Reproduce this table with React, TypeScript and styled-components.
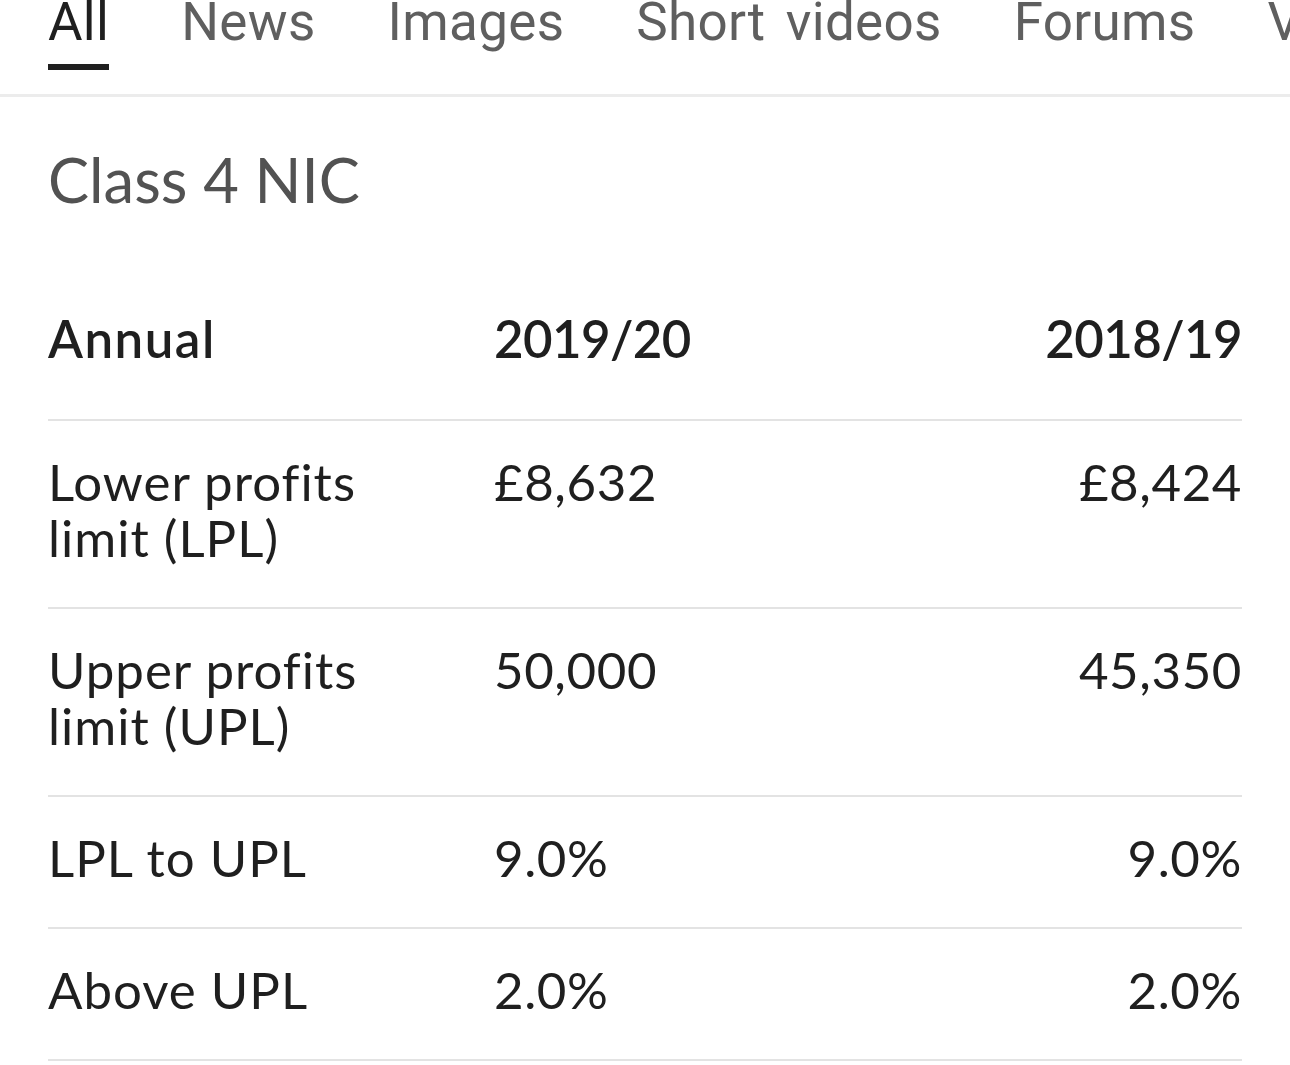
import React from "react";
import styled, { createGlobalStyle } from "styled-components";

const GlobalStyle = createGlobalStyle`
  html, body {
    margin: 0;
    padding: 0;
    background: #ffffff;
    overflow: hidden;
  }
`;

const Page = styled.div`
  width: 1290px;
  min-height: 1065px;
  background: #ffffff;
`;

const TabBar = styled.nav`
  display: flex;
  gap: 72px;
  padding: 0 48px 24px;
  border-bottom: 3px solid #ececec;
  overflow: hidden;
  white-space: nowrap;
`;

const Tab = styled.div<{ $active?: boolean }>`
  display: flex;
  flex-direction: column;
  flex-shrink: 0;
  font-family: Roboto, "Liberation Sans", sans-serif;
  font-size: 53px;
  line-height: 44px;
  letter-spacing: 0.3px;
  word-spacing: 7px;
  color: ${(p) => (p.$active ? "#1f1f1f" : "#5f5f5f")};

  &::after {
    content: "";
    display: block;
    height: 6px;
    margin-top: 20px;
    background: ${(p) => (p.$active ? "#1f1f1f" : "transparent")};
  }
`;

const Content = styled.div`
  padding: 46px 48px 0;
  font-family: Lato, "Open Sans", sans-serif;
`;

const Title = styled.h2`
  margin: 0;
  font-size: 61.5px;
  line-height: 72px;
  font-weight: 400;
  color: #525252;
`;

const Row = styled.div<{ $head?: boolean }>`
  display: grid;
  grid-template-columns: 446px 1fr auto;
  padding: ${(p) => (p.$head ? "96px 0 52px" : "33px 0 41px")};
  border-bottom: 2px solid #e3e3e3;
  font-size: 51px;
  line-height: 56px;
  font-weight: ${(p) => (p.$head ? 600 : 400)};
  letter-spacing: ${(p) => (p.$head ? "-0.6px" : "0.6px")};
  color: #1f1f1f;
`;

const Cell = styled.div<{ $right?: boolean }>`
  text-align: ${(p) => (p.$right ? "right" : "left")};
`;

const LabelCell = styled.div<{ $head?: boolean }>`
  letter-spacing: ${(p) => (p.$head ? "1.5px" : "1px")};
`;

const tabs = ["All", "News", "Images", "Short videos", "Forums", "Videos"];

const rows = [
  { label: ["Lower profits", "limit (LPL)"], a: "£8,632", b: "£8,424" },
  { label: ["Upper profits", "limit (UPL)"], a: "50,000", b: "45,350" },
  { label: ["LPL to UPL"], a: "9.0%", b: "9.0%" },
  { label: ["Above UPL"], a: "2.0%", b: "2.0%" },
];

export default function App() {
  return (
    <Page>
      <GlobalStyle />
      <TabBar>
        {tabs.map((t, i) => (
          <Tab key={t} $active={i === 0}>
            {t}
          </Tab>
        ))}
      </TabBar>
      <Content>
        <Title>Class 4 NIC</Title>
        <Row $head>
          <LabelCell $head>Annual</LabelCell>
          <Cell>2019/20</Cell>
          <Cell $right>2018/19</Cell>
        </Row>
        {rows.map((r) => (
          <Row key={r.label.join(" ")}>
            <LabelCell>
              {r.label.map((l, i) => (
                <React.Fragment key={l}>
                  {i > 0 && <br />}
                  {l}
                </React.Fragment>
              ))}
            </LabelCell>
            <Cell>{r.a}</Cell>
            <Cell $right>{r.b}</Cell>
          </Row>
        ))}
      </Content>
    </Page>
  );
}
